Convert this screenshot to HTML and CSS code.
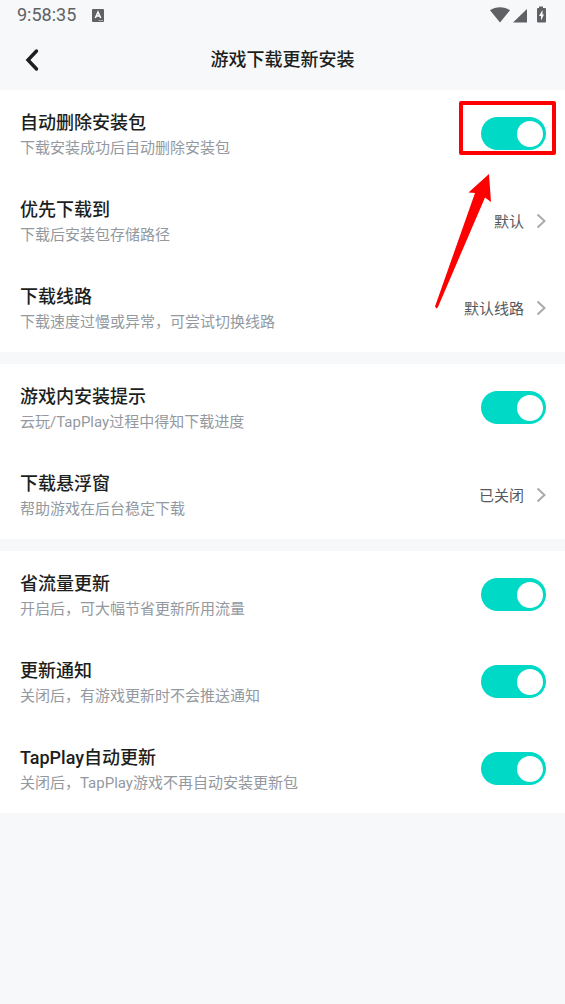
FILE: index.html
```html
<!DOCTYPE html>
<html lang="zh-CN">
<head>
<meta charset="utf-8">
<meta name="viewport" content="width=device-width, initial-scale=1">
<title>游戏下载更新安装</title>
<link rel="stylesheet" href="styles.css">
</head>
<body>
<div class="status">
  <span class="clock">9:58:35</span>
  <svg class="app-badge" width="12" height="13" viewBox="0 0 12 13" aria-hidden="true"><rect width="12" height="13" rx="1" fill="#606164"/><path d="M3.3 9L6 3L8.7 9M4.3 7H7.7" fill="none" stroke="#fff" stroke-width="1.5"/><path d="M6.5 11.5H11" stroke="#a9aaac"/></svg>
  <svg class="signals" width="57" height="18" viewBox="0 0 57 18" fill="#606164" aria-hidden="true"><path d="M0 4.2C5.500 .3 14.500 .3 20 4.200L10 16.500Z"/><path d="M37 3V16.500H23Z"/><path fill-rule="evenodd" d="M49 .500H53V2H55Q56 2 56 3V15.500Q56 16.500 55 16.500H48Q47 16.500 47 15.500V3Q47 2 48 2H49ZM52.500 4L49 10H51V14.500L54 8.400H52.500Z"/></svg>
</div>
<header class="topbar">
  <button class="back" type="button" aria-label="返回"><svg width="14" height="24" viewBox="0 0 14 24" aria-hidden="true"><path d="M11.500 3L3 12L11.500 21" fill="none" stroke="#1c1e20" stroke-width="3.400" stroke-linecap="round"/></svg></button>
  <h1 class="heading">游戏下载更新安装</h1>
</header>
<main class="settings">
  <section class="group">
    <label class="row">
      <span class="text"><span class="title">自动删除安装包</span><span class="desc">下载安装成功后自动删除安装包</span></span>
      <input class="switch" type="checkbox" role="switch" checked>
      <span class="marker"></span>
      <svg class="arrow" width="58" height="136" viewBox="0 0 58 136" aria-hidden="true"><path d="M55 1L34.500 19.500L41 20L1 133.500L2.500 135.500L4 134L51 24.500L57 29Z" fill="#fe0000"/></svg>
    </label>
    <button class="row" type="button">
      <span class="text"><span class="title">优先下载到</span><span class="desc">下载后安装包存储路径</span></span>
      <span class="value">默认</span>
      <svg class="chevron" width="10" height="16" viewBox="0 0 10 16" aria-hidden="true"><path d="M1.500 1.500L8.500 8L1.500 14.500"/></svg>
    </button>
    <button class="row" type="button">
      <span class="text"><span class="title">下载线路</span><span class="desc">下载速度过慢或异常，可尝试切换线路</span></span>
      <span class="value">默认线路</span>
      <svg class="chevron" width="10" height="16" viewBox="0 0 10 16" aria-hidden="true"><path d="M1.500 1.500L8.500 8L1.500 14.500"/></svg>
    </button>
  </section>
  <section class="group">
    <label class="row">
      <span class="text"><span class="title">游戏内安装提示</span><span class="desc">云玩/TapPlay过程中得知下载进度</span></span>
      <input class="switch" type="checkbox" role="switch" checked>
    </label>
    <button class="row" type="button">
      <span class="text"><span class="title">下载悬浮窗</span><span class="desc">帮助游戏在后台稳定下载</span></span>
      <span class="value">已关闭</span>
      <svg class="chevron" width="10" height="16" viewBox="0 0 10 16" aria-hidden="true"><path d="M1.500 1.500L8.500 8L1.500 14.500"/></svg>
    </button>
  </section>
  <section class="group">
    <label class="row">
      <span class="text"><span class="title">省流量更新</span><span class="desc">开启后，可大幅节省更新所用流量</span></span>
      <input class="switch" type="checkbox" role="switch" checked>
    </label>
    <label class="row">
      <span class="text"><span class="title">更新通知</span><span class="desc">关闭后，有游戏更新时不会推送通知</span></span>
      <input class="switch" type="checkbox" role="switch" checked>
    </label>
    <label class="row">
      <span class="text"><span class="title">TapPlay自动更新</span><span class="desc">关闭后，TapPlay游戏不再自动安装更新包</span></span>
      <input class="switch" type="checkbox" role="switch" checked>
    </label>
  </section>
</main>
</body>
</html>
```
FILE: styles.css
```css
* { box-sizing: border-box; }
body {
  margin: 0;
  min-height: 100vh;
  background: #f7f8fa;
  color: #1c1e20;
  font-family: Roboto, "Noto Sans CJK SC", sans-serif;
}
.status {
  display: flex;
  align-items: center;
  height: 30px;
  padding: 0 18px 0 17px;
}
.clock {
  color: #606164;
  font-size: 18px;
  line-height: 30px;
}
.app-badge { margin-left: 16px; }
.signals { margin-left: auto; }
.topbar {
  display: grid;
  grid-template-columns: 52px 1fr 52px;
  align-items: center;
  height: 60px;
}
.back {
  display: flex;
  padding: 0 0 0 25px;
  border: 0;
  background: none;
}
.heading {
  margin: 0;
  font-size: 18px;
  font-weight: 500;
  line-height: 26px;
  text-align: center;
}
.settings {
  display: flex;
  flex-direction: column;
  gap: 12px;
}
.group {
  padding-bottom: 1px;
  background: #fff;
}
.row {
  position: relative;
  display: flex;
  align-items: center;
  width: 100%;
  min-height: 87px;
  padding: 16px 19px 16px 20px;
  border: 0;
  background: none;
  color: inherit;
  font: inherit;
  text-align: left;
}
.text {
  display: flex;
  flex: 1;
  flex-direction: column;
  padding-top: 3px;
}
.title {
  font-size: 18px;
  font-weight: 500;
  line-height: 26px;
}
.desc {
  color: #93999f;
  font-size: 15px;
  line-height: 24px;
}
.value {
  padding-top: 2px;
  color: #55595e;
  font-size: 15px;
  line-height: 24px;
}
.chevron {
  margin-left: 12px;
  fill: none;
  stroke: #aaa;
  stroke-width: 2;
}
.switch {
  display: flex;
  align-items: center;
  justify-content: flex-end;
  appearance: none;
  width: 65px;
  height: 33px;
  margin: 0;
  padding: 3px;
  border-radius: 17px;
  background: #00d9c5;
}
.switch::before {
  content: "";
  width: 26px;
  height: 26px;
  border-radius: 50%;
  background: #fff;
}
.switch:not(:checked) {
  justify-content: flex-start;
  background: #d5d8dc;
}
.marker {
  position: absolute;
  top: 11px;
  right: 9px;
  width: 97px;
  height: 54px;
  border: 4px solid #fe0000;
  border-radius: 2px;
}
.arrow {
  position: absolute;
  z-index: 1;
  top: 83px;
  right: 73px;
  pointer-events: none;
}
```
